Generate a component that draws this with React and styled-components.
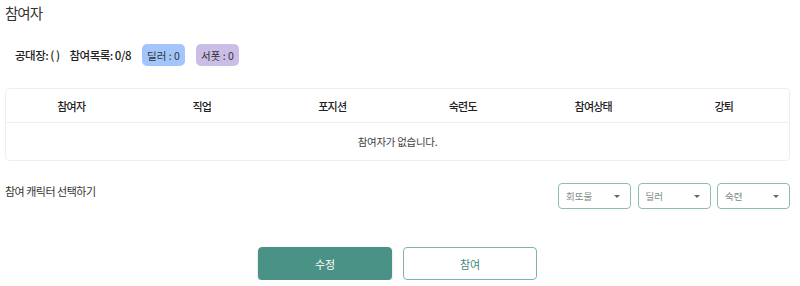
import React from "react";
import styled, { createGlobalStyle } from "styled-components";

const Global = createGlobalStyle`
  html, body { margin: 0; padding: 0; background: #fff; }
  body { font-family: "Noto Sans CJK KR", "Noto Sans", sans-serif; color: #333; }
`;

const Page = styled.div`
  width: 785px;
  padding: 0 10px 0 5px;
  display: flex;
  flex-direction: column;
`;

const Title = styled.h2`
  margin: 3px 0 0;
  font-size: 14.5px;
  font-weight: 400;
  letter-spacing: -1px;
  line-height: 20px;
  color: #333;
`;

const InfoRow = styled.div`
  display: flex;
  align-items: center;
  margin-top: 21px;
  padding-left: 10px;
  height: 22px;
  font-size: 11.5px;
  letter-spacing: -0.5px;
  color: #222;
`;

const InfoText = styled.span`
  margin-right: 10px;
  font-weight: 500;
  white-space: pre;
`;

const Badge = styled.span`
  display: inline-flex;
  align-items: center;
  justify-content: center;
  width: 43px;
  height: 22px;
  border-radius: 5px;
  font-size: 10.5px;
  letter-spacing: 0;
  font-weight: 400;
  color: #333;
  background: ${(p) => p.$bg};
  margin-left: ${(p) => p.$ml || 0}px;
`;

const Table = styled.div`
  margin-top: 22px;
  border: 1px solid #eee;
  border-radius: 4px;
  display: grid;
  grid-template-columns: repeat(6, 1fr);
`;

const HeadCell = styled.div`
  height: 33px;
  display: flex;
  align-items: center;
  justify-content: center;
  font-size: 11px;
  letter-spacing: -0.8px;
  font-weight: 500;
  color: #222;
  border-bottom: 1px solid #eee;
`;

const EmptyCell = styled.div`
  grid-column: 1 / -1;
  height: 37px;
  display: flex;
  align-items: center;
  justify-content: center;
  font-size: 10.5px;
  letter-spacing: -0.3px;
  color: #444;
`;

const SelectRow = styled.div`
  display: flex;
  align-items: flex-start;
  margin-top: 22px;
`;

const SelectLabel = styled.div`
  flex: 1;
  font-size: 11px;
  letter-spacing: -0.5px;
  color: #333;
  line-height: 16px;
`;

const Selects = styled.div`
  display: flex;
  gap: 6.5px;
`;

const SelectBox = styled.div`
  width: 73px;
  height: 26px;
  box-sizing: border-box;
  border: 1px solid #8cbdb2;
  border-radius: 4px;
  display: flex;
  align-items: center;
  justify-content: space-between;
  padding: 0 10px 0 7px;
  font-size: 9.5px;
  color: #7a8a86;
`;

const Caret = styled.span`
  width: 0;
  height: 0;
  border-left: 3.5px solid transparent;
  border-right: 3.5px solid transparent;
  border-top: 3.5px solid #666;
`;

const Buttons = styled.div`
  display: flex;
  justify-content: center;
  gap: 11px;
  margin-top: 38px;
`;

const Button = styled.button`
  width: 134px;
  height: 33px;
  box-sizing: border-box;
  border-radius: 4px;
  font-family: inherit;
  font-size: 11px;
  border: 1px solid ${(p) => (p.$primary ? "#4a9186" : "#7fb3a8")};
  background: ${(p) => (p.$primary ? "#4a9186" : "#fff")};
  color: ${(p) => (p.$primary ? "#fff" : "#3f8a7e")};
  box-shadow: ${(p) => (p.$primary ? "0 1px 2px rgba(0,0,0,0.25)" : "none")};
`;

const heads = ["참여자", "직업", "포지션", "숙련도", "참여상태", "강퇴"];
const selects = ["회또울", "딜러", "숙련"];

export default function App() {
  return (
    <Page>
      <Global />
      <Title>참여자</Title>
      <InfoRow>
        <InfoText>공대장: ( )</InfoText>
        <InfoText>참여목록: 0/8</InfoText>
        <Badge $bg="#a2c6fb" $ml={1}>딜러 : 0</Badge>
        <Badge $bg="#cabde6" $ml={11}>서폿 : 0</Badge>
      </InfoRow>
      <Table>
        {heads.map((h) => (
          <HeadCell key={h}>{h}</HeadCell>
        ))}
        <EmptyCell>참여자가 없습니다.</EmptyCell>
      </Table>
      <SelectRow>
        <SelectLabel>참여 캐릭터 선택하기</SelectLabel>
        <Selects>
          {selects.map((s) => (
            <SelectBox key={s}>
              {s}
              <Caret />
            </SelectBox>
          ))}
        </Selects>
      </SelectRow>
      <Buttons>
        <Button $primary>수정</Button>
        <Button>참여</Button>
      </Buttons>
    </Page>
  );
}
